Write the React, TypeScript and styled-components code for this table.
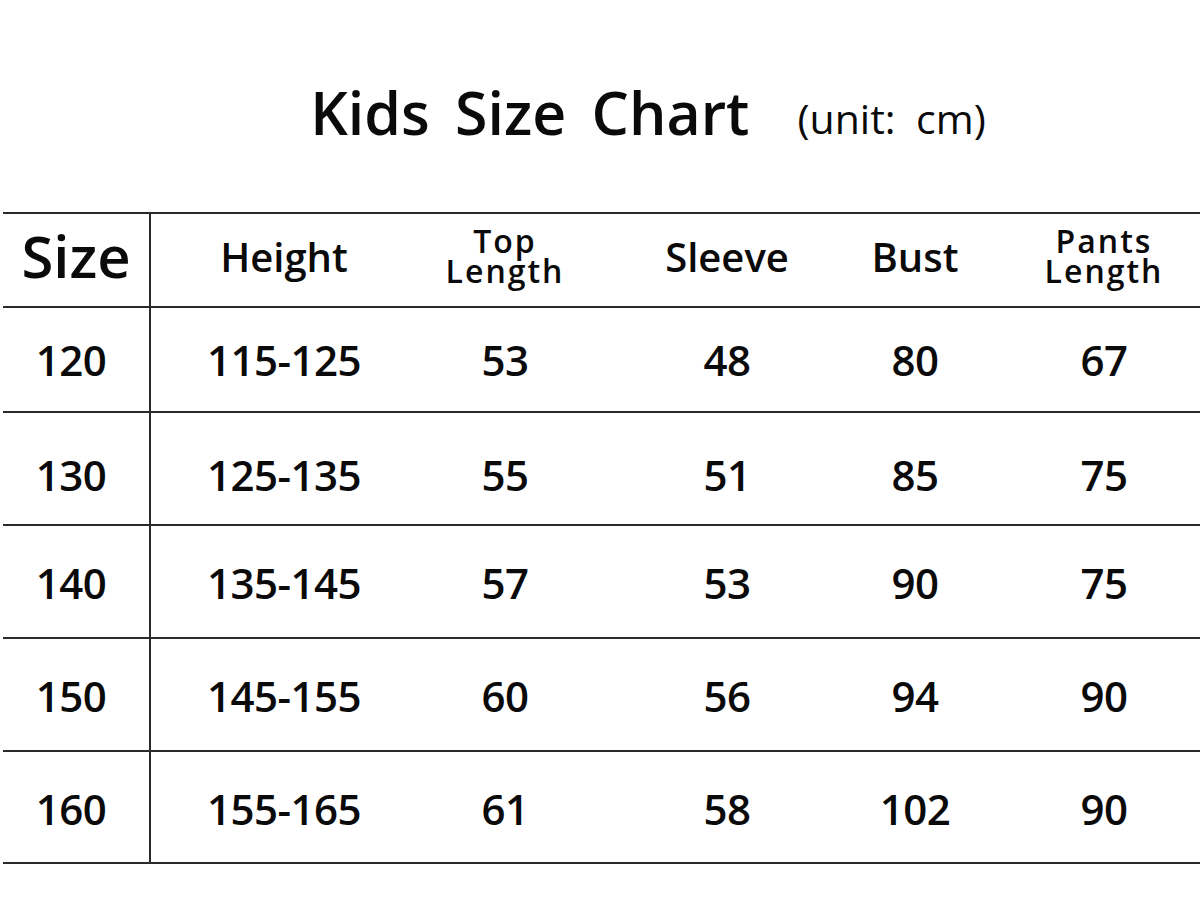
import React from "react";
import styled, { createGlobalStyle } from "styled-components";

const Global = createGlobalStyle`
  html, body { margin: 0; padding: 0; background: #fff; overflow: hidden; }
  body { font-family: "Open Sans", "Noto Sans", sans-serif; color: #0a0a0a; }
`;

const Page = styled.div`
  width: 1200px;
  height: 909px;
  background: #fff;
  display: flex;
  flex-direction: column;
`;

const TitleBar = styled.div`
  height: 212px;
  display: flex;
  align-items: center;
  justify-content: center;
  padding-left: 96px;
  padding-top: 12px;
  box-sizing: border-box;
  gap: 48px;
`;

const Title = styled.h1`
  margin: 0;
  font-size: 59px;
  font-weight: 600;
  word-spacing: 10px;
  line-height: 1;
`;

const Unit = styled.span`
  font-size: 41px;
  font-weight: 500;
  line-height: 1;
  margin-top: 12px;
  white-space: pre;
`;

const Table = styled.div`
  margin-left: 3px;
  width: 1197px;
  overflow: hidden;
  border-bottom: 2px solid #2a2a2a;
`;

const Row = styled.div<{ $h: number }>`
  display: grid;
  grid-template-columns: 148px 266px 176px 268px 108px 270px;
  height: ${(p) => p.$h}px;
  border-top: 2px solid #2a2a2a;
  box-sizing: border-box;
`;

const Cell = styled.div<{ $first?: boolean; $dy?: number }>`
  display: flex;
  align-items: center;
  justify-content: center;
  text-align: center;
  border-right: ${(p) => (p.$first ? "2px solid #2a2a2a" : "none")};
  padding-top: ${(p) => (p.$dy ?? 0) * 2}px;
  padding-right: ${(p) => (p.$first ? 10 : 0)}px;
  box-sizing: border-box;
`;

const HeadBig = styled.span`
  font-size: 58px;
  font-weight: 600;
  line-height: 1;
  margin-bottom: 8px;
  margin-left: 10px;
`;

const Head = styled.span`
  font-size: 40px;
  font-weight: 600;
  line-height: 1;
  margin-bottom: 6px;
`;

const HeadTwo = styled.span`
  display: flex;
  flex-direction: column;
  align-items: center;
  font-size: 32px;
  font-weight: 600;
  letter-spacing: 2px;
  margin-bottom: 8px;
`;

const HeadLine = styled.span`
  display: block;
  line-height: 30px;
  height: 30px;
`;

const Value = styled.span`
  font-size: 42px;
  font-weight: 600;
  letter-spacing: -0.5px;
  line-height: 1;
`;

const rows = [
  { h: 105, dy: 0, v: ["120", "115-125", "53", "48", "80", "67"] },
  { h: 113, dy: 6, v: ["130", "125-135", "55", "51", "85", "75"] },
  { h: 113, dy: 1, v: ["140", "135-145", "57", "53", "90", "75"] },
  { h: 113, dy: 1, v: ["150", "145-155", "60", "56", "94", "90"] },
  { h: 112, dy: 2, v: ["160", "155-165", "61", "58", "102", "90"] },
];

export default function App() {
  return (
    <Page>
      <Global />
      <TitleBar>
        <Title>Kids Size Chart</Title>
        <Unit>{"(unit:\u2002cm)"}</Unit>
      </TitleBar>
      <Table>
        <Row $h={94}>
          <Cell $first>
            <HeadBig>Size</HeadBig>
          </Cell>
          <Cell>
            <Head>Height</Head>
          </Cell>
          <Cell>
            <HeadTwo>
              <HeadLine>Top</HeadLine>
              <HeadLine>Length</HeadLine>
            </HeadTwo>
          </Cell>
          <Cell>
            <Head>Sleeve</Head>
          </Cell>
          <Cell>
            <Head>Bust</Head>
          </Cell>
          <Cell>
            <HeadTwo>
              <HeadLine>Pants</HeadLine>
              <HeadLine>Length</HeadLine>
            </HeadTwo>
          </Cell>
        </Row>
        {rows.map((r) => (
          <Row key={r.v[0]} $h={r.h}>
            {r.v.map((val, i) => (
              <Cell key={i} $first={i === 0} $dy={r.dy}>
                <Value>{val}</Value>
              </Cell>
            ))}
          </Row>
        ))}
      </Table>
    </Page>
  );
}
